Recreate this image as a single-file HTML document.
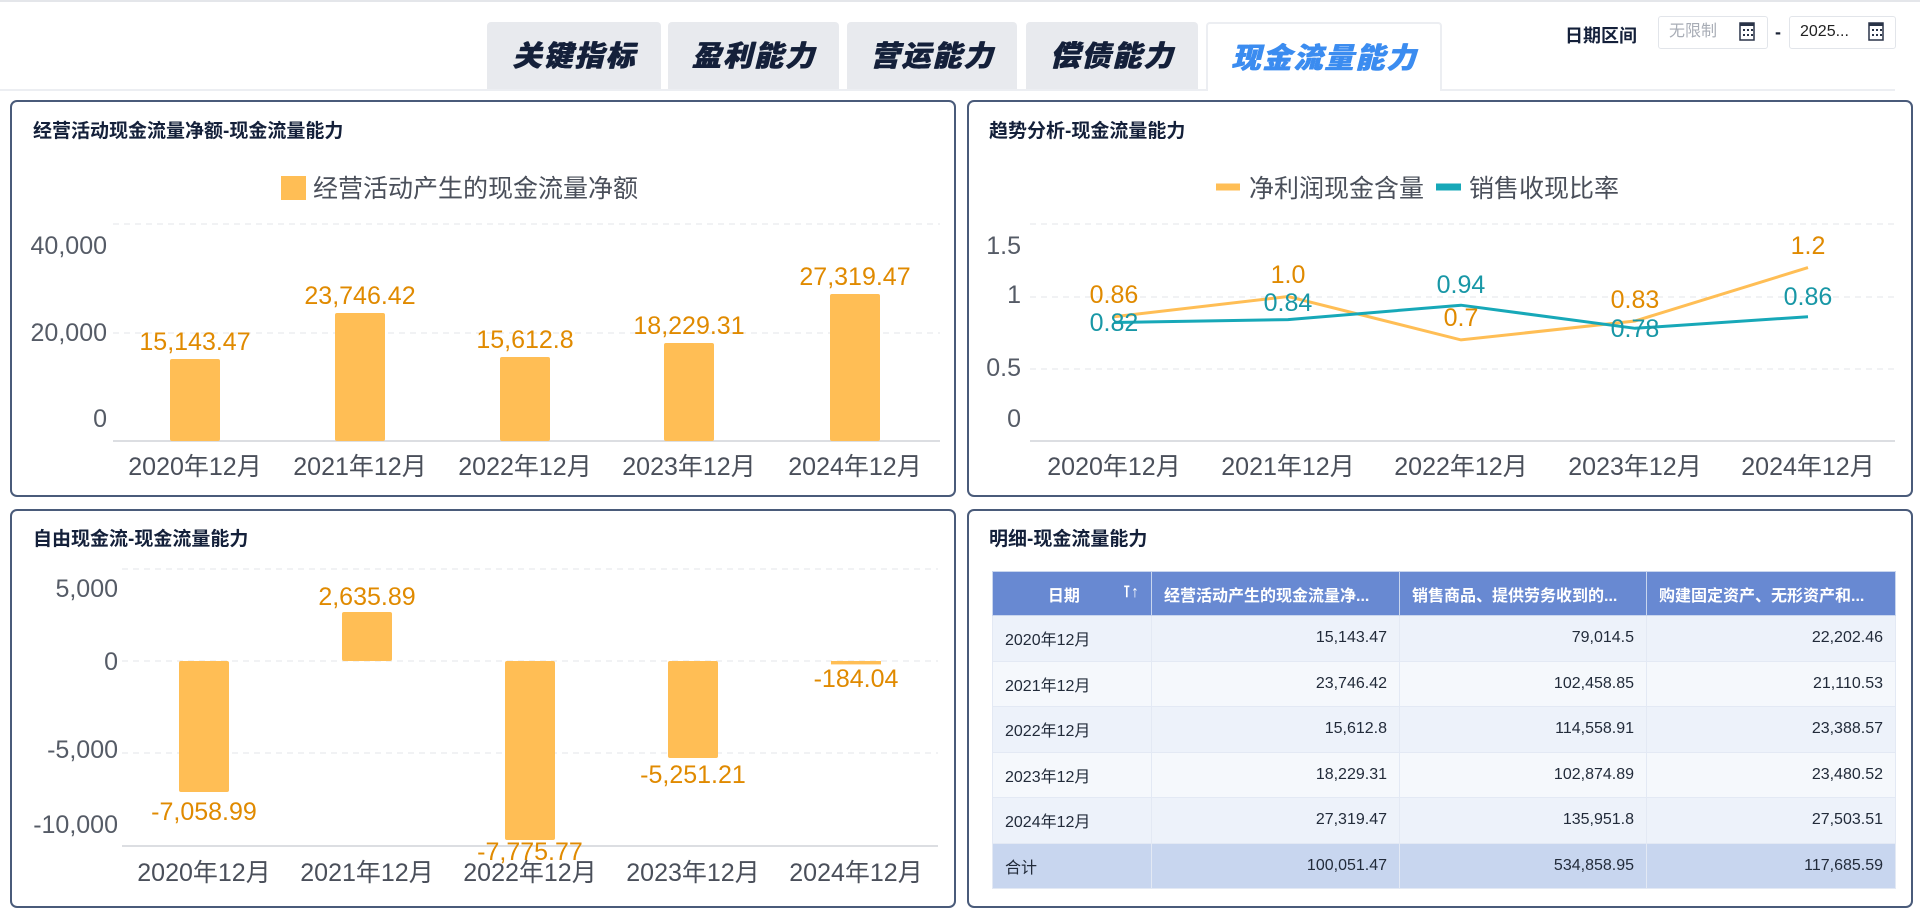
<!DOCTYPE html>
<html><head><meta charset="utf-8"><style>
*{margin:0;padding:0;box-sizing:border-box}
body{width:1920px;height:909px;background:#fff;position:relative;overflow:hidden;font-family:"Liberation Sans","Noto Sans CJK SC",sans-serif;color:#1b2336}
.abs{position:absolute}
.tab{position:absolute;top:22px;height:67px;background:#e8eaee;border-radius:4px 4px 0 0;font-size:29px;font-weight:900;font-style:italic;color:#14203a;text-align:center;line-height:70px;letter-spacing:2px;text-shadow:1px 0 0 currentColor}
.tab.act{background:#fff;border:2px solid #eceef2;border-bottom:none;color:#3b8cf0}
.panel{position:absolute;border:2px solid #4a5b7a;border-radius:7px;background:#fff}
.ttl{position:absolute;font-size:19px;font-weight:bold;color:#14203a}
.inp{position:absolute;top:16px;height:33px;border:1.5px solid #e2e5ea;border-radius:3px;font-size:16px;line-height:30px;padding-left:10px}
table{position:absolute;left:992px;top:571px;width:903px;border-collapse:collapse;font-size:16px;table-layout:fixed}
td,th{height:45.5px;border:1.5px solid #e3e9f4;padding:0 12px;white-space:nowrap;overflow:hidden}
th{background:#6889d2;color:#fff;height:44px;text-align:left;font-weight:bold;border-color:#c9d6ee}
td{text-align:right;color:#222b3a}
td:first-child{text-align:left}
tr.a td{background:#edf2fa}
tr.b td{background:#f5f8fc}
tr.s td{background:#c8d6ef}
</style></head><body>
<div class="abs" style="left:0;top:0;width:1920px;height:2px;background:#e4e6ea"></div>
<div class="abs" style="left:0;top:89px;width:1895px;height:2px;background:#eceef2"></div>
<div class="tab" style="left:487px;width:174px">关键指标</div>
<div class="tab" style="left:668px;width:171px">盈利能力</div>
<div class="tab" style="left:847px;width:170px">营运能力</div>
<div class="tab" style="left:1026px;width:172px">偿债能力</div>
<div class="tab act" style="left:1206px;width:236px;height:69px">现金流量能力</div>
<div class="abs" style="left:1565px;top:22px;font-size:18px;font-weight:bold;color:#14203a">日期区间</div>
<div class="inp" style="left:1658px;width:110px;color:#a8adb6">无限制</div>
<div class="abs" style="left:1775px;top:22px;font-size:18px;font-weight:bold">-</div>
<div class="inp" style="left:1789px;width:107px;color:#222">2025...</div>
<svg class="abs" style="left:0;top:0" width="1920" height="909">
<g fill="none" stroke="#2a3448" stroke-width="1.5">
<rect x="1740" y="23" width="14" height="17"/><rect x="1869" y="23" width="14" height="17"/>
</g>
<g fill="#2a3448"><rect x="1740" y="23" width="14" height="3"/><rect x="1869" y="23" width="14" height="3"/>
<rect x="1743" y="29" width="2" height="2"/><rect x="1747" y="29" width="2" height="2"/><rect x="1751" y="29" width="2" height="2"/><rect x="1743" y="34" width="2" height="2"/><rect x="1747" y="34" width="2" height="2"/><rect x="1751" y="34" width="2" height="2"/>
<rect x="1872" y="29" width="2" height="2"/><rect x="1876" y="29" width="2" height="2"/><rect x="1880" y="29" width="2" height="2"/><rect x="1872" y="34" width="2" height="2"/><rect x="1876" y="34" width="2" height="2"/><rect x="1880" y="34" width="2" height="2"/></g>
</svg>

<div class="panel" style="left:10px;top:100px;width:946px;height:397px"></div>
<div class="panel" style="left:967px;top:100px;width:946px;height:397px"></div>
<div class="panel" style="left:10px;top:509px;width:946px;height:399px"></div>
<div class="panel" style="left:967px;top:509px;width:946px;height:399px"></div>
<div class="ttl" style="left:33px;top:116px">经营活动现金流量净额-现金流量能力</div>
<div class="ttl" style="left:989px;top:116px">趋势分析-现金流量能力</div>
<div class="ttl" style="left:33px;top:524px">自由现金流-现金流量能力</div>
<div class="ttl" style="left:989px;top:524px">明细-现金流量能力</div>

<svg class="abs" style="left:0;top:0" width="1920" height="909" font-family="Liberation Sans, Noto Sans CJK SC, sans-serif">
<rect x="281" y="176" width="25" height="24" fill="#ffbe55"/>
<text x="313" y="197" font-size="25" fill="#4a4f5a">经营活动产生的现金流量净额</text>
<g stroke="#e3e5e9" stroke-dasharray="6,5"><line x1="113" y1="224" x2="940" y2="224"/><line x1="113" y1="333" x2="940" y2="333"/></g>
<line x1="113" y1="441" x2="940" y2="441" stroke="#d0d3d9" stroke-width="1.5"/>
<g font-size="25" fill="#555b66" text-anchor="end"><text x="107" y="254">40,000</text><text x="107" y="341">20,000</text><text x="107" y="427">0</text></g>
<g fill="#ffbe55"><rect x="170" y="359" width="50" height="82" rx="2"/><rect x="335" y="313" width="50" height="128" rx="2"/><rect x="500" y="357" width="50" height="84" rx="2"/><rect x="664" y="343" width="50" height="98" rx="2"/><rect x="830" y="294" width="50" height="147" rx="2"/></g>
<g font-size="25" fill="#e08a00" text-anchor="middle"><text x="195" y="350">15,143.47</text><text x="360" y="304">23,746.42</text><text x="525" y="348">15,612.8</text><text x="689" y="334">18,229.31</text><text x="855" y="285">27,319.47</text></g>
<g font-size="25" fill="#4a4f5a" text-anchor="middle"><text x="195" y="475">2020年12月</text><text x="360" y="475">2021年12月</text><text x="525" y="475">2022年12月</text><text x="689" y="475">2023年12月</text><text x="855" y="475">2024年12月</text></g>
<line x1="1216" y1="187" x2="1240" y2="187" stroke="#ffbe55" stroke-width="7"/>
<text x="1249" y="197" font-size="25" fill="#4a4f5a">净利润现金含量</text>
<line x1="1436" y1="187" x2="1461" y2="187" stroke="#17a8b8" stroke-width="7"/>
<text x="1469" y="197" font-size="25" fill="#4a4f5a">销售收现比率</text>
<g stroke="#e3e5e9" stroke-dasharray="6,5"><line x1="1030" y1="224" x2="1895" y2="224"/><line x1="1030" y1="297" x2="1895" y2="297"/><line x1="1030" y1="369" x2="1895" y2="369"/></g>
<line x1="1030" y1="441" x2="1895" y2="441" stroke="#d0d3d9" stroke-width="1.5"/>
<g font-size="25" fill="#555b66" text-anchor="end"><text x="1021" y="254">1.5</text><text x="1021" y="303">1</text><text x="1021" y="376">0.5</text><text x="1021" y="427">0</text></g>
<polyline points="1114,316.7 1288,296.5 1461,339.9 1635,321 1808,267.6" fill="none" stroke="#ffbe55" stroke-width="3"/>
<polyline points="1114,322.5 1288,319.6 1461,305.2 1635,328.3 1808,316.7" fill="none" stroke="#17a8b8" stroke-width="3"/>
<g font-size="25" fill="#e08a00" text-anchor="middle"><text x="1114" y="303">0.86</text><text x="1288" y="283">1.0</text><text x="1461" y="326">0.7</text><text x="1635" y="308">0.83</text><text x="1808" y="254">1.2</text></g>
<g font-size="25" fill="#1897a6" text-anchor="middle"><text x="1114" y="331">0.82</text><text x="1288" y="311">0.84</text><text x="1461" y="293">0.94</text><text x="1635" y="337">0.78</text><text x="1808" y="305">0.86</text></g>
<g font-size="25" fill="#4a4f5a" text-anchor="middle"><text x="1114" y="475">2020年12月</text><text x="1288" y="475">2021年12月</text><text x="1461" y="475">2022年12月</text><text x="1635" y="475">2023年12月</text><text x="1808" y="475">2024年12月</text></g>
<g stroke="#e3e5e9" stroke-dasharray="6,5"><line x1="122" y1="569" x2="938" y2="569"/><line x1="122" y1="661" x2="938" y2="661"/><line x1="122" y1="753" x2="938" y2="753"/></g>
<line x1="122" y1="846" x2="938" y2="846" stroke="#d0d3d9" stroke-width="1.5"/>
<g font-size="25" fill="#555b66" text-anchor="end"><text x="118" y="597">5,000</text><text x="118" y="670">0</text><text x="118" y="758">-5,000</text><text x="118" y="833">-10,000</text></g>
<g fill="#ffbe55"><rect x="179" y="661" width="50" height="131" rx="2"/><rect x="342" y="612" width="50" height="49" rx="2"/><rect x="505" y="661" width="50" height="179" rx="2"/><rect x="668" y="661" width="50" height="97" rx="2"/><rect x="831" y="661" width="50" height="3.4"/></g>
<g font-size="25" fill="#e08a00" text-anchor="middle"><text x="204" y="820">-7,058.99</text><text x="367" y="605">2,635.89</text><text x="530" y="860">-7,775.77</text><text x="693" y="783">-5,251.21</text><text x="856" y="687">-184.04</text></g>
<g font-size="25" fill="#4a4f5a" text-anchor="middle"><text x="204" y="881">2020年12月</text><text x="367" y="881">2021年12月</text><text x="530" y="881">2022年12月</text><text x="693" y="881">2023年12月</text><text x="856" y="881">2024年12月</text></g>
</svg>

<table>
<colgroup><col style="width:159px"><col style="width:248px"><col style="width:247px"><col style="width:249px"></colgroup>
<tr><th style="text-align:center">日期<span style="float:right">⊺↑</span></th><th>经营活动产生的现金流量净...</th><th>销售商品、提供劳务收到的...</th><th>购建固定资产、无形资产和...</th></tr>
<tr class="a"><td>2020年12月</td><td>15,143.47</td><td>79,014.5</td><td>22,202.46</td></tr>
<tr class="b"><td>2021年12月</td><td>23,746.42</td><td>102,458.85</td><td>21,110.53</td></tr>
<tr class="a"><td>2022年12月</td><td>15,612.8</td><td>114,558.91</td><td>23,388.57</td></tr>
<tr class="b"><td>2023年12月</td><td>18,229.31</td><td>102,874.89</td><td>23,480.52</td></tr>
<tr class="a"><td>2024年12月</td><td>27,319.47</td><td>135,951.8</td><td>27,503.51</td></tr>
<tr class="s"><td>合计</td><td>100,051.47</td><td>534,858.95</td><td>117,685.59</td></tr>
</table>
</body></html>
